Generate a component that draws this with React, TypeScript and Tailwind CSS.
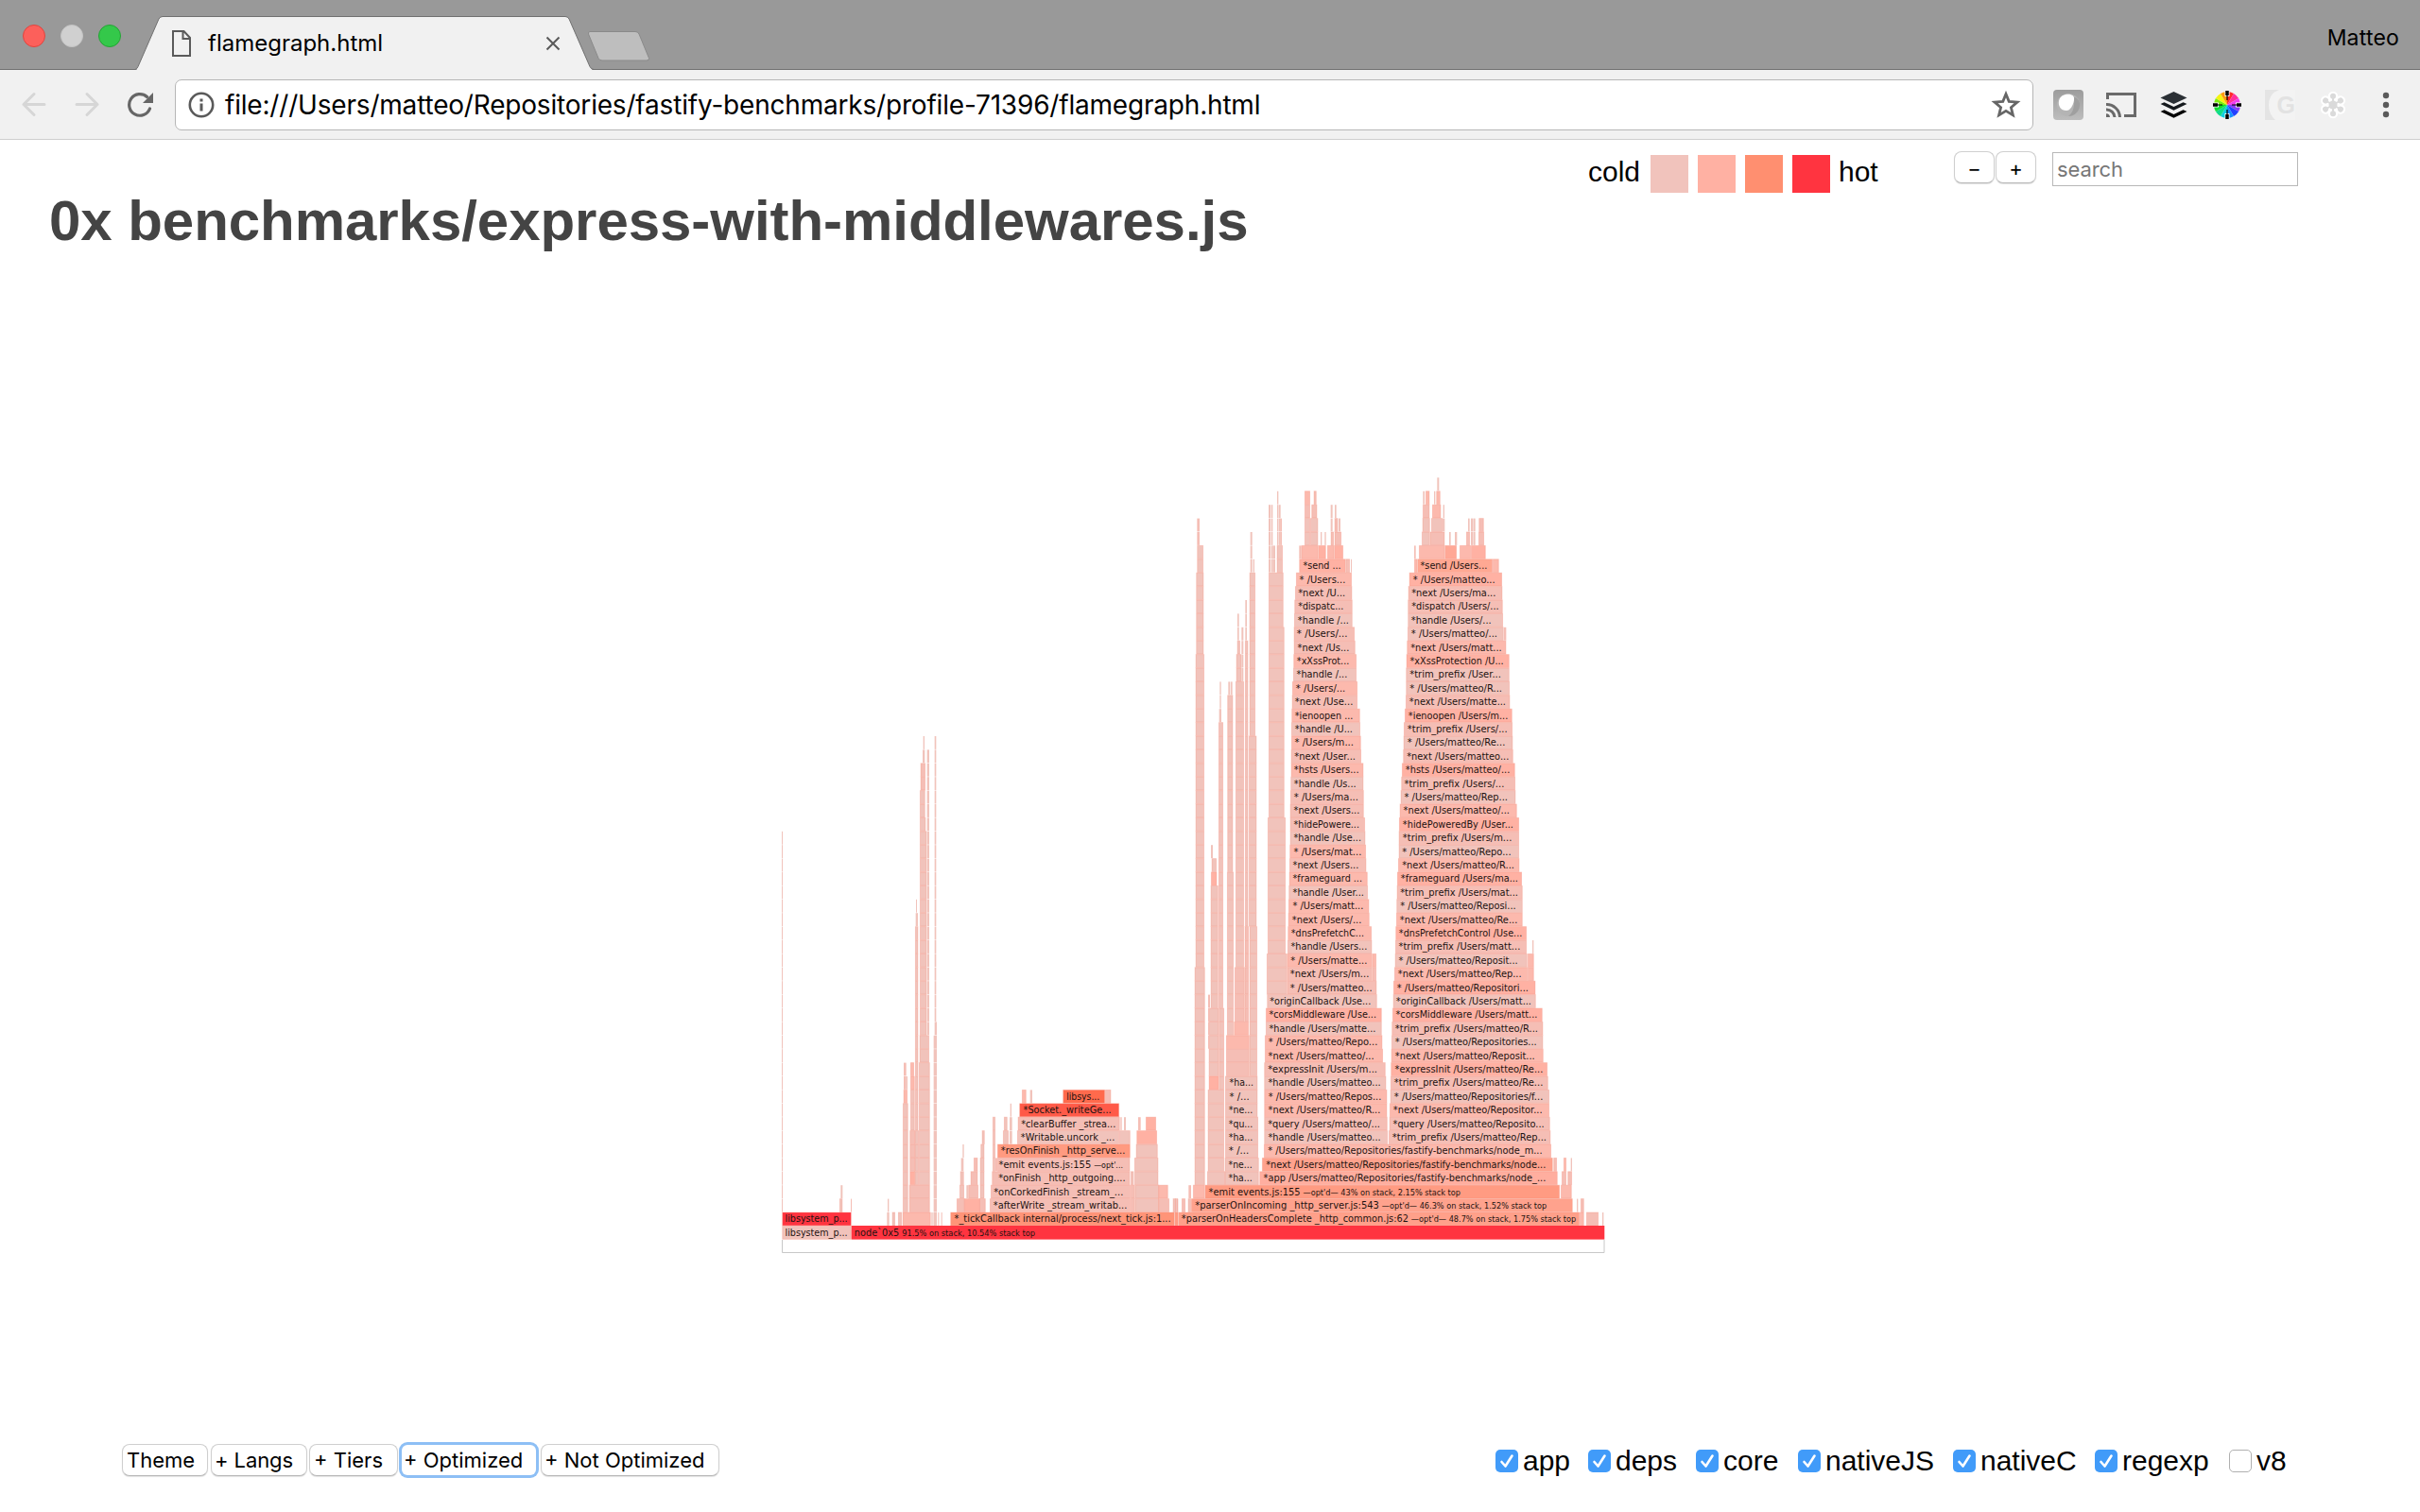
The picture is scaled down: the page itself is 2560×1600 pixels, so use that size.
import React from "react";

const COLD = "#f1c3bb";
const COOL = "#f5beb5";
const MILD = "#fcb9ad";
const WARM = "#ffb1a3";
const HOT = "#ff9c84";

const ROW = 14.4;
const BASE = 1297;
// Horizontal positions are stored in thirds of a pixel from one of two origins.
const L = 820;
const R = 1240;

type Block = [origin: number, x0: number, x1: number, from: number, to: number, fill: string];
type Label = [origin: number, x0: number, x1: number, row: number, text: string];
type Frame = [row: number, x0: number, x1: number, t0: number, t1: number, fill: string, text: string];

const blocks: Block[] = [
  [L, 21, 24, 2, 29, COLD],
  [L, 204, 214, 2, 2, COLD], [L, 208, 214, 3, 3, COLD], [L, 240, 243, 2, 2, COOL],
  [L, 355, 362, 1, 1, COLD], [L, 357, 361, 2, 2, COLD], [L, 371, 381, 1, 1, COLD], [L, 390, 402, 1, 1, COLD],
  [L, 404, 494, 1, 1, MILD], [L, 496, 500, 1, 1, COLD], [L, 503, 507, 1, 1, COLD],
  [L, 517, 520, 1, 1, COOL], [L, 527, 530, 1, 1, COOL],
  [L, 405, 422, 2, 9, COLD], [L, 407, 420, 10, 10, MILD], [L, 408, 416, 11, 12, COOL], [L, 416, 420, 11, 11, COLD],
  [L, 425, 491, 2, 3, COOL], [L, 427, 444, 4, 4, WARM], [L, 427, 444, 5, 7, COOL], [L, 429, 443, 8, 10, COLD],
  [L, 429, 443, 11, 11, MILD], [L, 429, 441, 12, 12, MILD],
  [L, 443, 456, 4, 7, COLD], [L, 444, 454, 8, 22, COLD], [L, 446, 453, 23, 23, COLD], [L, 447, 450, 24, 24, COLD],
  [L, 456, 491, 4, 12, COLD], [L, 458, 489, 13, 14, COLD], [L, 459, 481, 15, 29, COLD], [L, 459, 478, 30, 30, COLD],
  [L, 459, 476, 31, 32, COLD], [L, 461, 477, 33, 34, COOL], [L, 468, 475, 35, 35, COLD], [L, 470, 474, 36, 36, COLD],
  [L, 482, 489, 15, 35, COLD],
  [L, 506, 511, 1, 36, COLD], [L, 510, 513, 1, 15, COLD], [L, 503, 507, 1, 14, COLD],
  [L, 576, 602, 2, 2, COOL], [L, 585, 600, 3, 3, COLD], [L, 587, 599, 4, 4, COLD], [L, 590, 598, 5, 5, COLD], [L, 595, 599, 6, 6, COLD],
  [L, 600, 651, 2, 2, WARM], [L, 607, 613, 3, 3, COLD], [L, 613, 645, 3, 3, COOL], [L, 620, 643, 4, 4, COOL], [L, 630, 643, 5, 5, COOL],
  [L, 648, 668, 2, 2, COOL], [L, 650, 664, 3, 5, COLD], [L, 652, 664, 6, 6, COLD], [L, 656, 665, 7, 7, COLD],
  [L, 690, 699, 5, 8, COLD], [L, 699, 705, 5, 5, COOL],
  [L, 723, 741, 7, 7, COLD], [L, 726, 737, 8, 8, COLD], [L, 744, 752, 7, 8, COLD], [L, 746, 750, 9, 9, COLD],
  [L, 783, 797, 10, 10, MILD], [L, 809, 816, 10, 10, COLD], [L, 1047, 1066, 10, 10, COOL],
  [L, 1092, 1127, 7, 7, COLD], [L, 1096, 1100, 8, 8, COOL], [L, 1107, 1113, 8, 8, COLD],
  [L, 1128, 1142, 2, 3, COOL], [L, 1128, 1138, 4, 4, COLD], [L, 1142, 1218, 2, 3, COLD], [L, 1140, 1216, 4, 5, COLD],
  [L, 1145, 1214, 6, 6, COLD], [L, 1147, 1212, 7, 7, WARM], [L, 1152, 1160, 8, 8, COOL], [L, 1176, 1209, 8, 8, WARM],
  [L, 1216, 1247, 3, 3, MILD], [L, 1216, 1251, 2, 2, COOL],
  [L, 1262, 1272, 2, 2, COLD], [L, 1275, 1279, 2, 2, COLD], [L, 1268, 1280, 1, 1, HOT],

  [R, 9, 18, 2, 2, COLD], [R, 30, 42, 2, 2, COOL], [R, 50, 60, 2, 2, COLD], [R, 52, 60, 3, 3, COOL], [R, 66, 104, 3, 3, MILD],
  [R, 71, 104, 4, 19, COLD], [R, 74, 102, 20, 42, COLD], [R, 76, 100, 43, 48, COLD], [R, 79, 99, 49, 50, COLD], [R, 79, 87, 51, 52, COOL],
  [R, 111, 168, 4, 4, COLD], [R, 113, 165, 5, 10, COLD], [R, 116, 148, 11, 11, WARM], [R, 148, 165, 11, 16, COLD],
  [R, 116, 148, 12, 16, COLD], [R, 114, 120, 14, 17, COOL], [R, 122, 146, 17, 25, COLD], [R, 123, 142, 26, 26, WARM],
  [R, 125, 141, 27, 27, COLD], [R, 123, 129, 28, 28, COLD],
  [R, 147, 162, 17, 37, COLD], [R, 149, 156, 38, 38, COLD], [R, 151, 155, 39, 40, COLD],
  [R, 167, 275, 4, 5, COLD], [R, 168, 273, 6, 8, COLD], [R, 168, 271, 9, 11, COLD], [R, 171, 245, 12, 13, COOL], [R, 171, 245, 14, 14, MILD],
  [R, 245, 270, 12, 22, COLD], [R, 174, 195, 15, 26, COLD], [R, 175, 193, 27, 39, COLD], [R, 178, 184, 40, 40, COLD], [R, 186, 191, 40, 40, COLD],
  [R, 196, 243, 15, 15, MILD], [R, 198, 230, 16, 19, COOL], [R, 201, 228, 20, 40, COLD], [R, 203, 220, 41, 42, COLD],
  [R, 220, 226, 41, 44, COLD], [R, 206, 216, 43, 43, COLD], [R, 207, 212, 44, 45, COLD],
  [R, 230, 243, 16, 22, COOL], [R, 231, 241, 23, 43, COLD], [R, 232, 237, 44, 46, COLD],
  [R, 243, 268, 23, 36, COLD], [R, 245, 264, 37, 48, COLD], [R, 248, 254, 49, 51, COLD], [R, 257, 261, 49, 49, COLD],
  [R, 300, 365, 18, 20, COLD], [R, 303, 360, 21, 30, COLD], [R, 306, 356, 31, 44, COLD], [R, 306, 353, 45, 48, COLD],
  [R, 306, 312, 49, 53, COLD], [R, 314, 319, 49, 53, COLD], [R, 319, 327, 49, 50, COLD], [R, 332, 351, 49, 50, COLD],
  [R, 333, 337, 51, 54, COLD], [R, 338, 344, 51, 53, COLD], [R, 343, 348, 51, 52, COOL],
  [R, 403, 410, 50, 50, COOL], [R, 410, 463, 50, 50, MILD], [R, 463, 488, 50, 50, WARM], [R, 492, 514, 50, 50, MILD], [R, 514, 543, 50, 50, WARM],
  [R, 420, 438, 51, 52, COLD], [R, 438, 463, 51, 52, COLD], [R, 471, 475, 51, 51, COLD], [R, 484, 488, 51, 51, COLD],
  [R, 503, 513, 51, 51, COOL], [R, 515, 537, 51, 51, COOL], [R, 503, 509, 52, 53, COLD], [R, 515, 526, 52, 52, COOL], [R, 528, 534, 52, 52, COLD], [R, 516, 521, 53, 53, COLD],
  [R, 420, 438, 53, 53, COOL], [R, 442, 460, 53, 53, COOL], [R, 420, 438, 54, 54, MILD], [R, 449, 458, 54, 54, COOL],
  [R, 550, 564, 49, 49, COOL], [R, 567, 570, 49, 49, COLD],
  [R, 768, 773, 50, 50, COOL], [R, 783, 865, 50, 50, MILD], [R, 865, 903, 50, 50, "#ffa896"], [R, 912, 948, 50, 50, MILD], [R, 948, 995, 50, 50, WARM],
  [R, 792, 818, 51, 51, COLD], [R, 818, 865, 51, 51, COOL], [R, 879, 884, 51, 51, COLD], [R, 897, 904, 51, 51, COLD],
  [R, 933, 945, 51, 51, COOL], [R, 948, 955, 51, 52, COLD], [R, 956, 962, 51, 52, COLD], [R, 972, 990, 51, 51, COOL],
  [R, 794, 818, 52, 52, COLD], [R, 822, 858, 52, 52, COLD], [R, 858, 865, 52, 52, COLD], [R, 939, 944, 52, 52, COLD], [R, 973, 989, 52, 52, COOL],
  [R, 795, 817, 53, 53, COOL], [R, 825, 853, 53, 53, MILD], [R, 860, 864, 53, 53, COLD],
  [R, 796, 801, 54, 54, COLD], [R, 804, 817, 54, 54, MILD], [R, 831, 835, 54, 54, COLD], [R, 838, 851, 54, 54, MILD], [R, 841, 847, 55, 55, COLD],
  [R, 768, 778, 49, 49, MILD], [R, 1017, 1037, 49, 49, MILD], [R, 1053, 1060, 44, 44, COOL],
  [R, 635, 648, 20, 20, MILD], [R, 635, 648, 19, 19, COOL], [R, 1128, 1148, 19, 20, MILD], [R, 1143, 1147, 21, 21, COLD],
  [R, 1210, 1221, 5, 5, COOL], [R, 1242, 1251, 5, 5, MILD], [R, 1265, 1269, 5, 5, COLD],
  [R, 1236, 1251, 4, 4, COOL], [R, 1255, 1269, 4, 4, COOL], [R, 1233, 1268, 3, 3, MILD],
  [R, 1284, 1288, 2, 2, COLD], [R, 1296, 1307, 2, 2, COOL], [R, 1293, 1307, 1, 1, MILD], [R, 1314, 1353, 1, 1, COOL], [R, 1365, 1369, 1, 1, COLD],
];

const left: Frame[] = [
  [1, 22, 242, 33, 229, "#ff3440", "libsystem_p..."],
  [0, 22, 242, 33, 229, COLD, "libsystem_p..."],
  [1, 556, 1268, 570, 1255, "#ff9478", "*_tickCallback internal/process/next_tick.js:1..."],
  [2, 681, 1128, 694, 1116, COOL, "*afterWrite _stream_writab..."],
  [3, 684, 1128, 695, 1104, COOL, "*onCorkedFinish _stream_..."],
  [4, 688, 1126, 710, 1111, COOL, "*onFinish _http_outgoing...."],
  [5, 705, 1126, 711, 1002, COOL, "*emit events.js:155"],
  [6, 705, 1127, 718, 1110, "#ff9a80", "*resOnFinish _http_serve..."],
  [7, 768, 1092, 781, 1077, COLD, "*Writable.uncork _..."],
  [8, 770, 1094, 782, 1080, COOL, "*clearBuffer _strea..."],
  [9, 775, 1092, 789, 1066, "#ff5a48", "*Socket._writeGe..."],
  [10, 913, 1047, 926, 1029, "#ff6a4c", "libsys..."],
];

const right: Frame[] = [
  [1, 20, 1293, 31, 749, "#ffa08a", "*parserOnHeadersComplete _http_common.js:62"],
  [2, 60, 1271, 74, 656, "#ffa28d", "*parserOnIncoming _http_server.js:543"],
  [3, 104, 1230, 117, 406, "#ff9b82", "*emit events.js:155"],
  [4, 277, 1223, 291, 1185, "#ffae9f", "*app /Users/matteo/Repositories/fastify-benchmarks/node_..."],
  [5, 285, 1208, 299, 1185, "#ffa28d", "*next /Users/matteo/Repositories/fastify-benchmarks/node..."],
  [6, 291, 1203, 305, 1174, MILD, "* /Users/matteo/Repositories/fastify-benchmarks/node_m..."],
  [7, 292, 684, 306, 661, COLD, "*handle /Users/matteo..."],
  [8, 292, 683, 305, 659, COOL, "*query /Users/matteo/..."],
  [9, 292, 682, 306, 660, MILD, "*next /Users/matteo/R..."],
  [10, 292, 682, 307, 663, MILD, "* /Users/matteo/Repos..."],
  [11, 292, 679, 306, 661, COLD, "*handle /Users/matteo..."],
  [12, 292, 677, 305, 650, COOL, "*expressInit /Users/m..."],
  [13, 294, 669, 306, 640, MILD, "*next /Users/matteo/..."],
  [14, 294, 667, 307, 651, MILD, "* /Users/matteo/Repo..."],
  [15, 297, 665, 309, 645, COLD, "*handle /Users/matte..."],
  [16, 297, 665, 309, 647, WARM, "*corsMiddleware /Use..."],
  [17, 301, 650, 311, 630, COLD, "*originCallback /Use..."],
  [18, 365, 649, 376, 634, COOL, "* /Users/matteo..."],
  [19, 365, 635, 376, 624, COOL, "*next /Users/m..."],
  [20, 365, 635, 377, 618, MILD, "* /Users/matte..."],
  [21, 366, 634, 378, 618, COLD, "*handle /Users..."],
  [22, 367, 633, 379, 608, MILD, "*dnsPrefetchC..."],
  [23, 368, 626, 382, 600, MILD, "*next /Users/..."],
  [24, 369, 625, 384, 606, MILD, "* /Users/matt..."],
  [25, 370, 621, 384, 608, COLD, "*handle /User..."],
  [26, 371, 620, 384, 602, MILD, "*frameguard ..."],
  [27, 372, 616, 384, 591, COOL, "*next /Users..."],
  [28, 373, 615, 387, 600, MILD, "* /Users/mat..."],
  [29, 374, 613, 387, 599, COLD, "*handle /Use..."],
  [30, 374, 612, 387, 593, COOL, "*hidePowere..."],
  [31, 374, 608, 387, 594, COOL, "*next /Users..."],
  [32, 375, 608, 388, 590, COOL, "* /Users/ma..."],
  [33, 376, 607, 388, 583, COLD, "*handle /Us..."],
  [34, 377, 607, 388, 592, MILD, "*hsts /Users..."],
  [35, 377, 600, 389, 581, COOL, "*next /User..."],
  [36, 378, 599, 390, 575, MILD, "* /Users/m..."],
  [37, 378, 597, 391, 572, COLD, "*handle /U..."],
  [38, 379, 596, 391, 573, MILD, "*ienoopen ..."],
  [39, 380, 588, 391, 573, COOL, "*next /Use..."],
  [40, 381, 588, 394, 549, MILD, "* /Users/..."],
  [41, 384, 585, 396, 555, COLD, "*handle /..."],
  [42, 385, 585, 397, 561, MILD, "*xXssProt..."],
  [43, 386, 581, 399, 561, COOL, "*next /Us..."],
  [44, 386, 579, 397, 556, COOL, "* /Users/..."],
  [45, 387, 572, 400, 560, COLD, "*handle /..."],
  [46, 388, 572, 401, 543, COOL, "*dispatc..."],
  [47, 390, 571, 401, 549, COOL, "*next /U..."],
  [48, 393, 570, 405, 549, MILD, "* /Users..."],
  [49, 403, 550, 417, 535, WARM, "*send ..."],

  [7, 687, 1201, 700, 1187, COOL, "*trim_prefix /Users/matteo/Rep..."],
  [8, 689, 1199, 702, 1180, COOL, "*query /Users/matteo/Reposito..."],
  [9, 690, 1197, 703, 1174, MILD, "*next /Users/matteo/Repositor..."],
  [10, 692, 1197, 706, 1176, COLD, "* /Users/matteo/Repositories/f..."],
  [11, 693, 1193, 706, 1176, COOL, "*trim_prefix /Users/matteo/Re..."],
  [12, 694, 1191, 708, 1176, WARM, "*expressInit /Users/matteo/Re..."],
  [13, 695, 1178, 709, 1150, MILD, "*next /Users/matteo/Reposit..."],
  [14, 696, 1177, 709, 1156, COLD, "* /Users/matteo/Repositories..."],
  [15, 697, 1177, 709, 1160, COOL, "*trim_prefix /Users/matteo/R..."],
  [16, 699, 1175, 711, 1158, WARM, "*corsMiddleware /Users/matt..."],
  [17, 701, 1154, 712, 1139, COLD, "*originCallback /Users/matt..."],
  [18, 702, 1153, 715, 1130, WARM, "* /Users/matteo/Repositori..."],
  [19, 705, 1128, 718, 1108, MILD, "*next /Users/matteo/Rep..."],
  [20, 707, 1127, 720, 1096, COLD, "* /Users/matteo/Reposit..."],
  [21, 708, 1125, 720, 1104, COOL, "*trim_prefix /Users/matt..."],
  [22, 709, 1125, 721, 1110, WARM, "*dnsPrefetchControl /Use..."],
  [23, 711, 1112, 724, 1095, MILD, "*next /Users/matteo/Re..."],
  [24, 712, 1112, 725, 1090, COLD, "* /Users/matteo/Reposi..."],
  [25, 713, 1112, 725, 1097, COOL, "*trim_prefix /Users/mat..."],
  [26, 714, 1110, 727, 1097, WARM, "*frameguard /Users/ma..."],
  [27, 717, 1102, 731, 1085, MILD, "*next /Users/matteo/R..."],
  [28, 719, 1101, 731, 1075, COLD, "* /Users/matteo/Repo..."],
  [29, 719, 1101, 733, 1077, COOL, "*trim_prefix /Users/m..."],
  [30, 720, 1101, 733, 1082, WARM, "*hidePoweredBy /User..."],
  [31, 722, 1094, 735, 1070, MILD, "*next /Users/matteo/..."],
  [32, 725, 1090, 738, 1064, COLD, "* /Users/matteo/Rep..."],
  [33, 727, 1089, 738, 1053, COOL, "*trim_prefix /Users/..."],
  [34, 729, 1088, 742, 1071, WARM, "*hsts /Users/matteo/..."],
  [35, 733, 1082, 746, 1068, COOL, "*next /Users/matteo..."],
  [36, 734, 1081, 748, 1056, COLD, "* /Users/matteo/Re..."],
  [37, 735, 1080, 748, 1063, COOL, "*trim_prefix /Users/..."],
  [38, 738, 1079, 751, 1065, WARM, "*ienoopen /Users/m..."],
  [39, 741, 1072, 754, 1058, COOL, "*next /Users/matte..."],
  [40, 742, 1071, 755, 1046, COLD, "* /Users/matteo/R..."],
  [41, 742, 1070, 755, 1043, COLD, "*trim_prefix /User..."],
  [42, 743, 1070, 756, 1051, WARM, "*xXssProtection /U..."],
  [43, 745, 1060, 758, 1045, MILD, "*next /Users/matt..."],
  [44, 747, 1052, 760, 1031, COLD, "* /Users/matteo/..."],
  [45, 748, 1050, 760, 1012, COLD, "*handle /Users/..."],
  [46, 748, 1049, 761, 1036, COOL, "*dispatch /Users/..."],
  [47, 749, 1048, 761, 1026, COOL, "*next /Users/ma..."],
  [48, 752, 1047, 766, 1024, WARM, "* /Users/matteo..."],
  [49, 778, 1017, 789, 999, "#ffa893", "*send /Users..."],
];

const labels: Label[] = [
  [R, 183, 257, 11, "*ha..."], [R, 183, 244, 10, "* /..."], [R, 181, 255, 9, "*ne..."], [R, 181, 255, 8, "*qu..."],
  [R, 181, 255, 7, "*ha..."], [R, 181, 243, 6, "* /..."], [R, 180, 253, 5, "*ne..."], [R, 180, 253, 4, "*ha..."],
];

const notes: Label[] = [
  [L, 404, 824, 0, "91.5% on stack, 10.54% stack top"],
  [L, 1013, 1103, 5, "—opt'..."],
  [R, 760, 1281, 1, "—opt'd— 48.7% on stack, 1.75% stack top"],
  [R, 667, 1188, 2, "—opt'd— 46.3% on stack, 1.52% stack top"],
  [R, 417, 914, 3, "—opt'd— 43% on stack, 2.15% stack top"],
];

const top = (row: number) => BASE - row * ROW;

function Cell({ x, w, row, fill }: { x: number; w: number; row: number; fill: string }) {
  const thin = w < 3;
  return (
    <rect
      x={thin ? x : x + 0.4}
      y={top(row) + 0.4}
      width={thin ? w : w - 0.8}
      height={ROW - 0.5}
      fill={fill}
      stroke={thin ? "none" : "#f58f7c"}
      strokeOpacity={0.38}
      strokeWidth={0.9}
    />
  );
}

function Word({ origin, x0, x1, row, text, size }: { origin: number; x0: number; x1: number; row: number; text: string; size: number }) {
  return (
    <text
      x={origin + x0 / 3 - 0.5}
      y={top(row) + 10.8}
      textLength={(x1 - x0) / 3 + 0.8}
      lengthAdjust="spacingAndGlyphs"
      fontSize={size}
      fill="#1c1210"
    >
      {text}
    </text>
  );
}

function FlameGraph() {
  return (
    <svg className="ml-[820px] block font-['DejaVu_Sans',sans-serif]" width="890" height="850" viewBox="820 490 890 850">
      {blocks.map(([o, x0, x1, from, to, fill], i) => (
        <g key={i}>
          {Array.from({ length: to - from + 1 }, (_, k) => (
            <Cell key={k} x={o + x0 / 3} w={(x1 - x0) / 3} row={from + k} fill={fill} />
          ))}
        </g>
      ))}
      {left.map(([row, x0, x1, t0, t1, fill, text], i) => (
        <g key={i}>
          <Cell x={L + x0 / 3} w={(x1 - x0) / 3} row={row} fill={fill} />
          <Word origin={L} x0={t0} x1={t1} row={row} text={text} size={9.6} />
        </g>
      ))}
      {right.map(([row, x0, x1, t0, t1, fill, text], i) => (
        <g key={i}>
          <Cell x={R + x0 / 3} w={(x1 - x0) / 3} row={row} fill={fill} />
          <Word origin={R} x0={t0} x1={t1} row={row} text={text} size={9.6} />
        </g>
      ))}
      <rect x="900.7" y="1297" width="796.6" height="14.6" fill="#ff3440" />
      <Word origin={L} x0={253} x1={393} row={0} text="node`0x5" size={9.6} />
      {labels.map(([o, x0, x1, row, text], i) => (
        <Word key={i} origin={o} x0={x0} x1={x1} row={row} text={text} size={9.6} />
      ))}
      {notes.map(([o, x0, x1, row, text], i) => (
        <Word key={i} origin={o} x0={x0} x1={x1} row={row} text={text} size={8} />
      ))}
      <path d="M827.5 1312V1325.5H1697V1312" fill="none" stroke="#c8c8c8" />
    </svg>
  );
}

function Tab() {
  return (
    <div className="relative ml-[15px] h-[74px] w-[486px] shrink-0">
      <svg className="absolute inset-0" width="486" height="74" viewBox="0 0 486 74">
        <path d="M0 73.5 Q2 73 3 70.5 L25 20 Q26.500 17.500 29 17.500 L455 17.500 Q457.500 17.500 459 20 L481 70.500 Q482.500 73.500 485 73.500" fill="#f1f1f1" stroke="#707070" />
        <rect x="2" y="73" width="481" height="1" fill="#f1f1f1" />
      </svg>
      <div className="relative flex h-full items-center pt-[18px] pl-[39px]">
        <svg width="20" height="28" viewBox="0 0 20 28" fill="none" stroke="#5a5a5a" strokeWidth="2">
          <path d="M1 1H12.500L19 8V27H1ZM11.500 1V9H19" />
        </svg>
        <span className="ml-[18px] w-[184px] text-[24px] whitespace-nowrap text-black">flamegraph.html</span>
        <svg className="ml-[173px]" width="16" height="16" viewBox="0 0 16 16" stroke="#5a5a5a" strokeWidth="2">
          <path d="M1.500 1.500L14.500 14.500M14.500 1.500L1.500 14.500" />
        </svg>
      </div>
    </div>
  );
}

function ColorWheel() {
  const hues = ["#ff2a2a", "#ff2f9b", "#f03cf0", "#8a3cf5", "#2440ff", "#1490ff", "#10d0e0", "#0fdc8a", "#10e030", "#7bee10", "#f4f410", "#ff9a10"];
  const pt = (a: number) => `${16 + 14 * Math.sin(a)} ${16 - 14 * Math.cos(a)}`;
  return (
    <svg width="32" height="32" viewBox="0 0 32 32">
      {hues.map((c, i) => (
        <path key={c} fill={c} d={`M16 16L${pt((i * Math.PI) / 6)}A14 14 0 0 1 ${pt(((i + 1) * Math.PI) / 6)}Z`} />
      ))}
      <path d="M16 2V7M16 25V30M2 16H7M25 16H30" stroke="#fff" strokeWidth="5" />
      <path d="M16 1V6M16 26V31M1 16H6M26 16H31" stroke="#000" strokeWidth="3.500" />
      <path d="M16 6V11M16 21V26M6 16H11M21 16H26" stroke="#000" strokeWidth="1.200" />
    </svg>
  );
}

function Toolbar() {
  return (
    <div className="flex h-[74px] items-center border-b border-[#cfcfcf] bg-[#f1f1f1] pl-[22px]">
      <svg width="28" height="28" viewBox="0 0 28 28" fill="none" stroke="#d6d6d6" strokeWidth="3" strokeLinecap="round" strokeLinejoin="round">
        <path d="M25 13.500H3M14 2.500L3 13.500L14 24.500" />
      </svg>
      <svg className="ml-[28px]" width="28" height="28" viewBox="0 0 28 28" fill="none" stroke="#d6d6d6" strokeWidth="3" strokeLinecap="round" strokeLinejoin="round">
        <path d="M3 13.500H25M14 2.500L25 13.500L14 24.500" />
      </svg>
      <svg className="ml-[28px]" width="30" height="28" viewBox="0 0 30 28" fill="none">
        <path d="M24.500 18A11.300 11.300 0 1 1 21.500 5.500" stroke="#666" strokeWidth="3.200" strokeLinecap="round" />
        <path d="M28 1V12H17Z" fill="#666" />
      </svg>
      <div className="ml-[21px] flex h-[54px] w-[1966px] shrink-0 items-center rounded-[7px] border border-[#b6b6b6] bg-white pr-[12px] pl-[13px]">
        <svg width="28" height="28" viewBox="0 0 28 28" fill="none" stroke="#5a5a5a">
          <circle cx="14" cy="14" r="12.200" strokeWidth="2.600" />
          <path d="M14 12.500V20.500M14 7.500V10.500" strokeWidth="3" />
        </svg>
        <span className="ml-[11px] text-[28px] tracking-[-0.19px] whitespace-nowrap text-black">
          file:///Users/matteo/Repositories/fastify-benchmarks/profile-71396/flamegraph.html
        </span>
        <svg className="ml-auto" width="32" height="32" viewBox="0 0 32 32" fill="none" stroke="#666" strokeWidth="2.800">
          <path d="M16 4.500L19.200 12.400L28 13.200L21.400 18.700L23.400 26.900L16 22.400L8.600 26.900L10.600 18.700L4 13.200L12.800 12.400Z" />
        </svg>
      </div>
      <svg className="ml-[21px]" width="32" height="32" viewBox="0 0 32 32">
        <defs>
          <linearGradient id="tile" x2="0" y2="1">
            <stop stopColor="#9c9c9c" />
            <stop offset="1" stopColor="#bdbdbd" />
          </linearGradient>
        </defs>
        <rect width="32" height="32" rx="4" fill="url(#tile)" />
        <circle cx="16" cy="16" r="12" fill="#b4b4b4" />
        <path d="M28 14C29 22 23 28 16 28C20 25 23 20 22 8C25 8 27 11 28 14Z" fill="#9f9f9f" />
        <path d="M13 5C19 4 23 6 22 11C21 17 18 22 14 22C8 22 5 17 6 12C7 8 9 6 13 5Z" fill="#fff" />
      </svg>
      <svg className="ml-[24px]" width="32" height="28" viewBox="0 0 32 28" fill="none" stroke="#6a6a6a" strokeWidth="3">
        <path d="M1.500 8V2.500H30.500V25.500H19" />
        <path d="M0 13.500A14 14 0 0 1 14.500 27M0 19A8.500 8.500 0 0 1 9 27" />
        <path d="M0 23.200A4 4 0 0 1 4 27H0Z" fill="#6a6a6a" stroke="none" />
      </svg>
      <svg className="ml-[25px]" width="29" height="30" viewBox="0 0 29 30">
        <path d="M14.500 1L28.500 7.500L14.500 14L.5 7.500Z" fill="#2b3035" />
        <path d="M.5 14L4.500 12.200L14.500 17L24.500 12.200L28.500 14L14.500 20.800Z" fill="#15191d" />
        <path d="M.5 22L4.500 20.200L14.500 25L24.500 20.200L28.500 22L14.500 28.800Z" fill="#000" />
      </svg>
      <div className="ml-[26px]"><ColorWheel /></div>
      <svg className="ml-[24px]" width="32" height="32" viewBox="0 0 32 32">
        <rect width="32" height="32" fill="#e4e4e4" />
        <path d="M15 0H32V32H11Q4 26 4 16Q4 4 15 0Z" fill="#f3f3f3" />
        <text x="12.500" y="25" fontSize="25" fontWeight="700" fill="#e2e2e2" fontFamily="Liberation Sans">G</text>
      </svg>
      <svg className="ml-[24px]" width="32" height="32" viewBox="0 0 32 32">
        {[0, 60, 120, 180, 240, 300].map((a) => (
          <circle key={a} cx="16" cy="7" r="5.300" fill="#fff" transform={`rotate(${a} 16 16)`} />
        ))}
        <circle cx="16" cy="16" r="9" fill="#fff" />
        {[0, 60, 120, 180, 240, 300].map((a) => (
          <g key={a} transform={`rotate(${a} 16 16)`} fill="#dadada">
            <circle cx="16" cy="6.800" r="3" />
            <rect x="15" y="7" width="2" height="9" />
          </g>
        ))}
        <circle cx="16" cy="16" r="4.500" fill="#dadada" />
      </svg>
      <svg className="ml-[36px]" width="8" height="28" viewBox="0 0 8 28" fill="#5a5a5a">
        <circle cx="4" cy="4" r="3.200" />
        <circle cx="4" cy="14" r="3.200" />
        <circle cx="4" cy="24" r="3.200" />
      </svg>
    </div>
  );
}

const buttonBase =
  "flex h-[34px] shrink-0 items-center rounded-[8px] border border-[#cfcfcf] border-b-[#b8b8b8] bg-white text-[22px] whitespace-nowrap text-black shadow-[0_1px_1px_rgba(0,0,0,0.12)]";

function Check({ label, checked, className }: { label: string; checked: boolean; className: string }) {
  return (
    <label className={`flex items-center ${className}`}>
      {checked ? (
        <svg width="24" height="24" viewBox="0 0 24 24" fill="none">
          <rect width="24" height="24" rx="5" fill="#419bf9" />
          <path d="M6.500 13L10.500 17.500L17.500 6.500" stroke="#fff" strokeWidth="2.600" strokeLinecap="round" strokeLinejoin="round" />
        </svg>
      ) : (
        <span className="size-[24px] rounded-[5px] border border-[#b0b0b0] bg-white" />
      )}
      <span className="ml-[5px] text-[30px] leading-[34px] text-black">{label}</span>
    </label>
  );
}

export default function App() {
  return (
    <div className="flex h-[1600px] w-[2560px] flex-col overflow-hidden bg-white font-['Inter',sans-serif]">
      <div className="flex h-[74px] shrink-0 items-start border-b border-[#707070] bg-[#999999]">
        <div className="flex gap-[16px] pt-[26px] pl-[24px]">
          <span className="size-[24px] rounded-full border border-[#e0443e] bg-[#fc605b]" />
          <span className="size-[24px] rounded-full border border-[#c4c4c4] bg-[#d0d0d0]" />
          <span className="size-[24px] rounded-full border border-[#25a335] bg-[#34c84a]" />
        </div>
        <Tab />
        <svg className="mt-[32px] -ml-[8px]" width="68" height="34" viewBox="0 0 68 34">
          <path d="M3 1.500H51Q54 1.500 55 4L65.500 29.500Q66 32 63 32H16Q13 32 12 29.500L1.500 4Q1 1.500 3 1.500Z" fill="#bebebe" stroke="#8a8a8a" />
        </svg>
        <span className="mt-[25px] mr-[22px] ml-auto text-[23px] leading-[30px] tracking-[0.2px] text-black">Matteo</span>
      </div>
      <Toolbar />
      <main className="flex h-[1452px] flex-col font-['Liberation_Sans',sans-serif]">
        <div className="flex h-[56px] items-start pl-[1680px]">
          <span className="mt-[17px] w-[66px] text-[30px] leading-[34px] text-black">cold</span>
          <div className="mt-[16px] flex gap-[10px]">
            <span className="size-[40px] bg-[#f1c3bc]" />
            <span className="size-[40px] bg-[#ffb1a3]" />
            <span className="size-[40px] bg-[#ff8f70]" />
            <span className="size-[40px] bg-[#ff3440]" />
          </div>
          <span className="mt-[17px] ml-[9px] w-[122px] text-[30px] leading-[34px] text-black">hot</span>
          <button className={`${buttonBase} mt-[12px] w-[43px] justify-center pt-[2px] font-['Inter',sans-serif] text-[20px]`}>−</button>
          <button className={`${buttonBase} mt-[12px] ml-[1px] w-[43px] justify-center pt-[2px] font-['Inter',sans-serif] text-[20px]`}>+</button>
          <div className="mt-[13px] ml-[17px] flex h-[36px] w-[260px] items-center border border-[#b8b8b8] pt-px pl-[4px] font-['Inter',sans-serif] text-[22px] tracking-[-0.1px] text-[#777777]">search</div>
        </div>
        <h1 className="ml-[52px] h-[286px] text-[60px] leading-[60px] font-bold tracking-[-0.05px] whitespace-nowrap text-[#444444]">
          0x benchmarks/express-with-middlewares.js
        </h1>
        <FlameGraph />
        <div className="mt-[188px] flex h-[34px] items-center pl-[129px] font-['Inter',sans-serif]">
          <button className={`${buttonBase} w-[91px] pt-px pl-[4px]`}>Theme</button>
          <button className={`${buttonBase} ml-[3px] w-[102px] pt-px pl-[3px] tracking-[-0.1px]`}>+ Langs</button>
          <button className={`${buttonBase} ml-[2px] w-[94px] pt-px pl-[4px]`}>+ Tiers</button>
          <button className="ml-[4px] flex h-[32px] w-[142px] shrink-0 items-center rounded-[6px] bg-white pt-px pl-[2px] text-[22px] whitespace-nowrap text-black shadow-[0_0_0_3px_#8dbff5]">+ Optimized</button>
          <button className={`${buttonBase} ml-[5px] w-[189px] pt-px pl-[3px]`}>+ Not Optimized</button>
          <div className="flex items-center pt-[2px] font-['Liberation_Sans',sans-serif]">
            <Check label="app" checked className="ml-[821px] w-[98px]" />
            <Check label="deps" checked className="w-[114px]" />
            <Check label="core" checked className="w-[108px]" />
            <Check label="nativeJS" checked className="w-[164px]" />
            <Check label="nativeC" checked className="w-[150px]" />
            <Check label="regexp" checked className="w-[142px]" />
            <Check label="v8" checked={false} className="w-[70px]" />
          </div>
        </div>
      </main>
    </div>
  );
}
